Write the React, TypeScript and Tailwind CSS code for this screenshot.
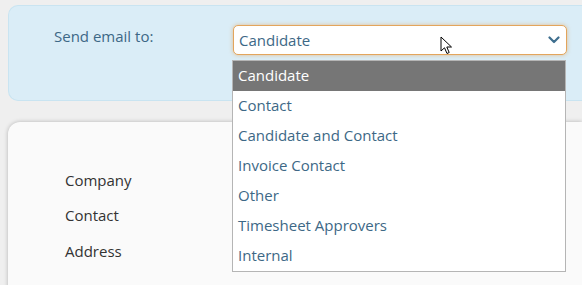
import React from "react";

const items = [
  "Candidate",
  "Contact",
  "Candidate and Contact",
  "Invoice Contact",
  "Other",
  "Timesheet Approvers",
  "Internal",
];

export default function App() {
  return (
    <div
      className="relative w-[582px] h-[285px] overflow-hidden bg-[#efefef]"
      style={{ fontFamily: '"Open Sans", sans-serif' }}
    >
      <div className="pt-[5px] pl-[8px]">
        <div className="h-[96px] rounded-l-[10px] border border-r-0 border-[#c9e4f1] bg-[#daedf7] flex pl-[45px] pt-[18px]">
          <div className="w-[179px] text-[15px] leading-[24px] text-[#3d6886]">Send email to:</div>
          <div className="relative mt-[1px] w-[334px] h-[30px] rounded-[5px] border border-[#e3a55c] bg-white shadow-[0_0_4px_rgba(230,160,80,0.6)] flex items-center pl-[5px]">
            <span className="text-[15px] text-[#3d6886]">Candidate</span>
            <svg className="absolute right-[6px] top-[10px]" width="12" height="8" viewBox="0 0 12 8">
              <path d="M1.5 1.5 L6 6 L10.5 1.5" fill="none" stroke="#3f6f8f" strokeWidth="2.2" strokeLinecap="round" strokeLinejoin="round" />
            </svg>
          </div>
        </div>
        <div className="mt-[21px] h-[200px] rounded-tl-[12px] bg-[#fafafa] shadow-[0_0_4px_rgba(0,0,0,0.25)] pl-[57px] pt-[46px] text-[15px] text-[#333333]">
          <div className="leading-[24px]">Company</div>
          <div className="leading-[24px] mt-[11px]">Contact</div>
          <div className="leading-[24px] mt-[12px]">Address</div>
        </div>
      </div>

      <div className="absolute left-[232px] top-[60px] w-[334px] border border-[#b5b5b5] bg-white">
        {items.map((it, i) => (
          <div
            key={it}
            className={
              i === 0
                ? "h-[30px] leading-[28px] pl-[5px] text-[15px] bg-[#767676] text-white"
                : "h-[30px] leading-[28px] pl-[5px] text-[15px] text-[#3d6886]"
            }
          >
            {it}
          </div>
        ))}
      </div>

      <svg className="absolute left-[440px] top-[36px]" width="14" height="20" viewBox="0 0 14 20">
        <path d="M1 1 L1 15 L4.5 11.8 L7 17.5 L9.2 16.5 L6.8 11 L11.5 11 Z" fill="white" stroke="black" strokeWidth="1" strokeLinejoin="miter" />
      </svg>
    </div>
  );
}
